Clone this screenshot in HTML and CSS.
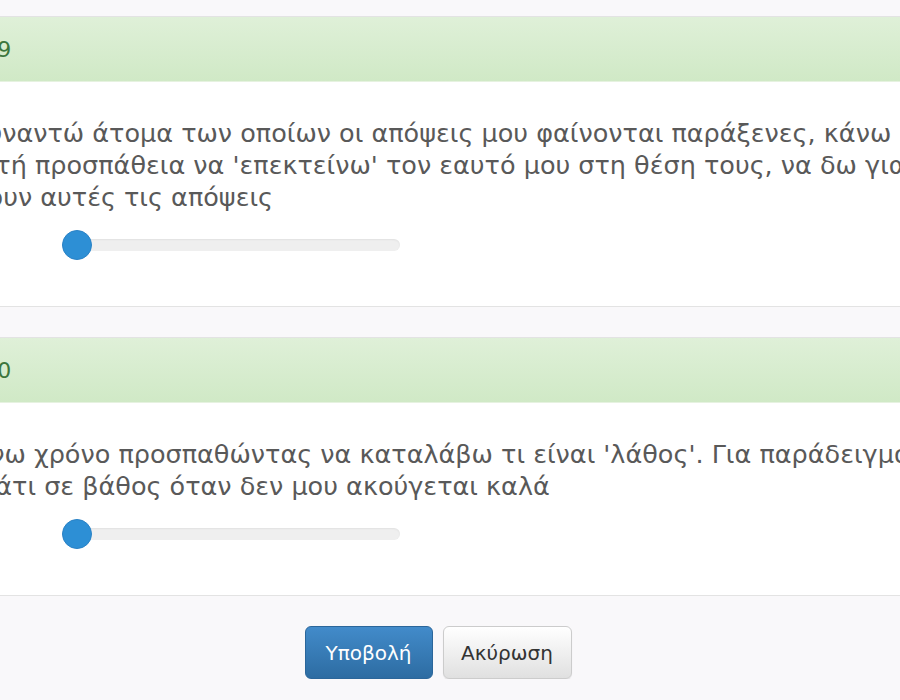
FILE: index.html
```html
<!DOCTYPE html>
<html lang="el">
<head>
<meta charset="UTF-8" />
<meta name="viewport" content="width=device-width, initial-scale=1" />
<title>Ερωτηματολόγιο</title>
<link rel="stylesheet" href="styles.css">
</head>
<body>
  <form class="survey">
    <div class="panel">
      <div class="panel-heading">Ερώτηση 19</div>
      <div class="panel-body">
        <p class="question">Όταν συναντώ άτομα των οποίων οι απόψεις μου φαίνονται παράξενες, κάνω μια<br>συνειδητή προσπάθεια να 'επεκτείνω' τον εαυτό μου στη θέση τους, να δω γιατί<br>όλοι έχουν αυτές τις απόψεις</p>
        <div class="slider" role="slider" aria-valuemin="1" aria-valuemax="5" aria-valuenow="1">
          <span class="slider-handle"></span>
        </div>
      </div>
    </div>

    <div class="panel">
      <div class="panel-heading">Ερώτηση 20</div>
      <div class="panel-body">
        <p class="question">Αφιερώνω χρόνο προσπαθώντας να καταλάβω τι είναι 'λάθος'. Για παράδειγμα, προσπαθώ<br>να δω κάτι σε βάθος όταν δεν μου ακούγεται καλά</p>
        <div class="slider" role="slider" aria-valuemin="1" aria-valuemax="5" aria-valuenow="1">
          <span class="slider-handle"></span>
        </div>
      </div>
    </div>

    <div class="form-actions">
      <button type="submit" class="btn btn-primary">Υποβολή</button>
      <button type="button" class="btn btn-default">Ακύρωση</button>
    </div>
  </form>
</body>
</html>
```

FILE: styles.css
```css
:root {
  --text: #595959;
  --green-text: #3c763d;
  --green-top: #dff0d8;
  --green-bottom: #d0e9c6;
  --border: #e3e3e3;
  --blue: #2d8fd5;
}

* {
  box-sizing: border-box;
}

html,
body {
  overflow: hidden;
}

body {
  margin: 0;
  background: #f9f8fa;
  font-family: 'DejaVu Sans', 'Open Sans', sans-serif;
  color: var(--text);
}

/* the form is wider than the window, as in the zoomed shot */
.survey {
  margin: 0 -126px 0 -150px;
  padding-top: 16px;
}

.panel {
  background: #fff;
  border: 1px solid var(--border);
  margin-bottom: 30px;
}

.panel-heading {
  height: 65px;
  padding: 0 24px;
  display: flex;
  align-items: center;
  font-size: 22px;
  color: var(--green-text);
  background: linear-gradient(to bottom, var(--green-top), var(--green-bottom));
  border-bottom: 1px solid #e6f2e0;
}

.panel-body {
  padding: 35px 22px 46px 45px;
}

.question {
  margin: 0;
  font-size: 25.5px;
  line-height: 32px;
  white-space: nowrap;
}

.slider {
  position: relative;
  width: 338px;
  height: 12px;
  margin: 26px 0 9px 166px;
  border-radius: 6px;
  background: #efefef;
  box-shadow: inset 0 1px 2px rgba(0, 0, 0, 0.06);
}

.slider-handle {
  position: absolute;
  left: 0;
  top: -9px;
  width: 30px;
  height: 30px;
  border-radius: 50%;
  background: var(--blue);
  border: 1px solid #2a82c6;
}

.form-actions {
  display: flex;
  justify-content: center;
  gap: 10px;
}

.btn {
  font-family: inherit;
  font-size: 20px;
  height: 53px;
  padding: 0 12px;
  border-radius: 6px;
  cursor: pointer;
}

.btn-primary {
  width: 128px;
  color: #fff;
  background: linear-gradient(to bottom, #428bca, #2d6ca2);
  border: 1px solid #2b669a;
}

.btn-default {
  width: 129px;
  color: #333;
  background: linear-gradient(to bottom, #fff, #e0e0e0);
  border: 1px solid #ccc;
  box-shadow: 0 1px 1px rgba(0, 0, 0, 0.08);
}
```
